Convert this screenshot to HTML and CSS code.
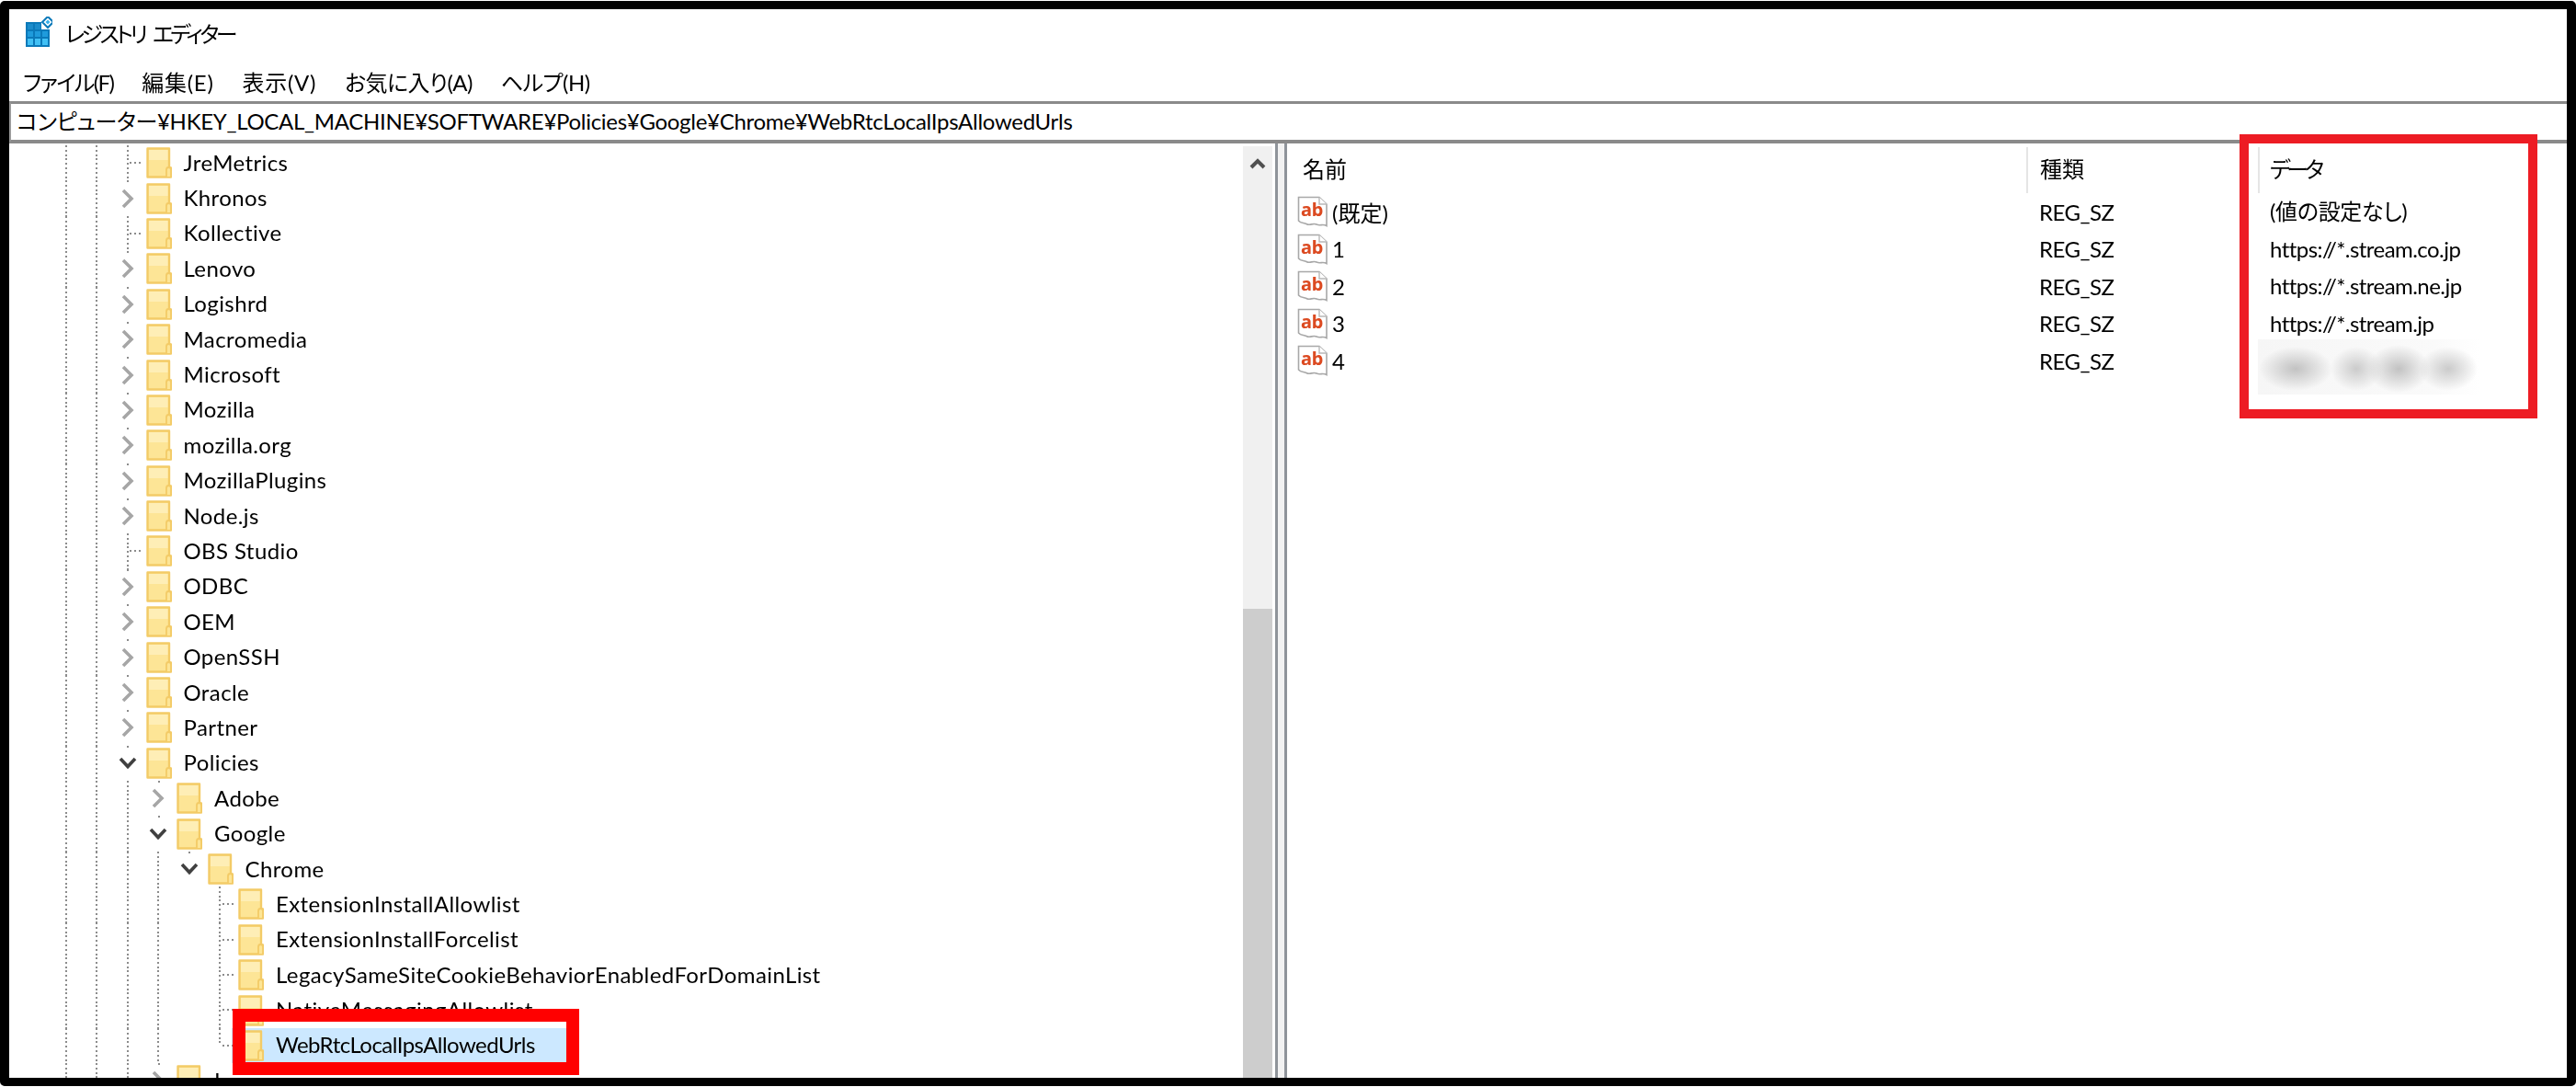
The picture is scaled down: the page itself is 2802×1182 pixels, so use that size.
FILE: index.html
```html
<!DOCTYPE html>
<html lang="ja">
<head>
<meta charset="utf-8">
<title>レジストリ エディター</title>
<link rel="stylesheet" href="styles.css">
</head>
<body>
<svg class="defs" width="0" height="0" aria-hidden="true">
  <symbol id="folder" viewBox="0 0 28 34">
    <path d="M1.5 1.5H25V22.5H27V32.5H1.5Z" fill="#fde596" stroke="#f3cb67" stroke-width="2.4" stroke-linejoin="round"/>
    <path d="M3 3H23.5V14H3Z" fill="#feeeb6"/>
    <path d="M22 32V24.5Q22 22 24.5 22Q27 22 27 24.5V32" fill="#fde596" stroke="#f3cb67" stroke-width="1.8"/>
  </symbol>
  <symbol id="closed" viewBox="0 0 16 24">
    <path d="M3 3L12 12L3 21" fill="none" stroke="#a6a6a6" stroke-width="3.6"/>
  </symbol>
  <symbol id="open" viewBox="0 0 20 16">
    <path d="M2 3L10 11.5L18 3" fill="none" stroke="#404040" stroke-width="3.6"/>
  </symbol>
  <symbol id="up" viewBox="0 0 20 14">
    <path d="M3 11L10 4L17 11" fill="none" stroke="#505050" stroke-width="4"/>
  </symbol>
  <symbol id="page" viewBox="0 0 34 34">
    <path d="M1.5 1.5H24L32 9V32.5C28 30 25 33 21 31C17 29 14 33 10 30.5C7 29 4 30 1.5 27Z" fill="#fff" stroke="#a8a8a8" stroke-width="1.6"/>
    <path d="M24 1.5V9H32" fill="#fff" stroke="#b8b8b8" stroke-width="1.4"/>
  </symbol>
</svg>
<div class="frame">
  <header class="titlebar">
    <svg class="appicon" width="30" height="36" viewBox="0 0 30 36">
      <path d="M1 6H18V14H27V33H1Z" fill="#0b79b9"/>
      <path d="M3 8H9V14H3ZM11 8H17V14H11Z" fill="#1b8ccb"/>
      <path d="M3 16H9V22H3ZM11 16H17V22H11ZM19 16H25V22H19Z" fill="#1f9bdc"/>
      <path d="M3 24H9V31H3ZM11 24H17V31H11ZM19 24H25V31H19Z" fill="#41c0f5"/>
      <path d="M25 0L31 6L25 12L19 6Z" fill="#fff" stroke="#0b79b9" stroke-width="2"/>
      <path d="M25 3.5L27.5 6L25 8.5L22.5 6Z" fill="#37b0ea"/>
    </svg>
    <span class="title-text">レジストリ エディター</span>
  </header>
  <nav class="menubar">
    <span class="menu-item kana">ファイル(F)</span>
    <span class="menu-item kanji">編集(E)</span>
    <span class="menu-item kanji">表示(V)</span>
    <span class="menu-item mixed">お気に入り(A)</span>
    <span class="menu-item mixed">ヘルプ(H)</span>
  </nav>
  <div class="address">コンピューター¥HKEY_LOCAL_MACHINE¥SOFTWARE¥Policies¥Google¥Chrome¥WebRtcLocalIpsAllowedUrls</div>
  <main class="split">
    <section class="tree-pane">
      <div class="tree">
        <div class="row"><i class="g"></i><i class="g"></i><i class="leaf"></i><svg class="folder"><use href="#folder"/></svg><span class="label">JreMetrics</span></div>
        <div class="row"><i class="g"></i><i class="g"></i><i class="twist"><svg class="chev"><use href="#closed"/></svg></i><svg class="folder"><use href="#folder"/></svg><span class="label">Khronos</span></div>
        <div class="row"><i class="g"></i><i class="g"></i><i class="leaf"></i><svg class="folder"><use href="#folder"/></svg><span class="label">Kollective</span></div>
        <div class="row"><i class="g"></i><i class="g"></i><i class="twist"><svg class="chev"><use href="#closed"/></svg></i><svg class="folder"><use href="#folder"/></svg><span class="label">Lenovo</span></div>
        <div class="row"><i class="g"></i><i class="g"></i><i class="twist"><svg class="chev"><use href="#closed"/></svg></i><svg class="folder"><use href="#folder"/></svg><span class="label">Logishrd</span></div>
        <div class="row"><i class="g"></i><i class="g"></i><i class="twist"><svg class="chev"><use href="#closed"/></svg></i><svg class="folder"><use href="#folder"/></svg><span class="label">Macromedia</span></div>
        <div class="row"><i class="g"></i><i class="g"></i><i class="twist"><svg class="chev"><use href="#closed"/></svg></i><svg class="folder"><use href="#folder"/></svg><span class="label">Microsoft</span></div>
        <div class="row"><i class="g"></i><i class="g"></i><i class="twist"><svg class="chev"><use href="#closed"/></svg></i><svg class="folder"><use href="#folder"/></svg><span class="label">Mozilla</span></div>
        <div class="row"><i class="g"></i><i class="g"></i><i class="twist"><svg class="chev"><use href="#closed"/></svg></i><svg class="folder"><use href="#folder"/></svg><span class="label">mozilla.org</span></div>
        <div class="row"><i class="g"></i><i class="g"></i><i class="twist"><svg class="chev"><use href="#closed"/></svg></i><svg class="folder"><use href="#folder"/></svg><span class="label">MozillaPlugins</span></div>
        <div class="row"><i class="g"></i><i class="g"></i><i class="twist"><svg class="chev"><use href="#closed"/></svg></i><svg class="folder"><use href="#folder"/></svg><span class="label">Node.js</span></div>
        <div class="row"><i class="g"></i><i class="g"></i><i class="leaf"></i><svg class="folder"><use href="#folder"/></svg><span class="label">OBS Studio</span></div>
        <div class="row"><i class="g"></i><i class="g"></i><i class="twist"><svg class="chev"><use href="#closed"/></svg></i><svg class="folder"><use href="#folder"/></svg><span class="label">ODBC</span></div>
        <div class="row"><i class="g"></i><i class="g"></i><i class="twist"><svg class="chev"><use href="#closed"/></svg></i><svg class="folder"><use href="#folder"/></svg><span class="label">OEM</span></div>
        <div class="row"><i class="g"></i><i class="g"></i><i class="twist"><svg class="chev"><use href="#closed"/></svg></i><svg class="folder"><use href="#folder"/></svg><span class="label">OpenSSH</span></div>
        <div class="row"><i class="g"></i><i class="g"></i><i class="twist"><svg class="chev"><use href="#closed"/></svg></i><svg class="folder"><use href="#folder"/></svg><span class="label">Oracle</span></div>
        <div class="row"><i class="g"></i><i class="g"></i><i class="twist"><svg class="chev"><use href="#closed"/></svg></i><svg class="folder"><use href="#folder"/></svg><span class="label">Partner</span></div>
        <div class="row"><i class="g"></i><i class="g"></i><i class="twist"><svg class="chev-open"><use href="#open"/></svg></i><svg class="folder"><use href="#folder"/></svg><span class="label">Policies</span></div>
        <div class="row"><i class="g"></i><i class="g"></i><i class="g"></i><i class="twist"><svg class="chev"><use href="#closed"/></svg></i><svg class="folder"><use href="#folder"/></svg><span class="label">Adobe</span></div>
        <div class="row"><i class="g"></i><i class="g"></i><i class="g"></i><i class="twist"><svg class="chev-open"><use href="#open"/></svg></i><svg class="folder"><use href="#folder"/></svg><span class="label">Google</span></div>
        <div class="row"><i class="g"></i><i class="g"></i><i class="g"></i><i class="g"></i><i class="twist"><svg class="chev-open"><use href="#open"/></svg></i><svg class="folder"><use href="#folder"/></svg><span class="label">Chrome</span></div>
        <div class="row"><i class="g"></i><i class="g"></i><i class="g"></i><i class="g"></i><i class="blank"></i><i class="leaf"></i><svg class="folder"><use href="#folder"/></svg><span class="label">ExtensionInstallAllowlist</span></div>
        <div class="row"><i class="g"></i><i class="g"></i><i class="g"></i><i class="g"></i><i class="blank"></i><i class="leaf"></i><svg class="folder"><use href="#folder"/></svg><span class="label">ExtensionInstallForcelist</span></div>
        <div class="row"><i class="g"></i><i class="g"></i><i class="g"></i><i class="g"></i><i class="blank"></i><i class="leaf"></i><svg class="folder"><use href="#folder"/></svg><span class="label">LegacySameSiteCookieBehaviorEnabledForDomainList</span></div>
        <div class="row"><i class="g"></i><i class="g"></i><i class="g"></i><i class="g"></i><i class="blank"></i><i class="leaf"></i><svg class="folder"><use href="#folder"/></svg><span class="label">NativeMessagingAllowlist</span></div>
        <div class="row"><i class="g"></i><i class="g"></i><i class="g"></i><i class="g"></i><i class="blank"></i><i class="leaf last"></i><span class="selected"><svg class="folder"><use href="#folder"/></svg><span class="label label-selected">WebRtcLocalIpsAllowedUrls</span></span></div>
        <div class="row"><i class="g"></i><i class="g"></i><i class="g"></i><i class="twist"><svg class="chev"><use href="#closed"/></svg></i><svg class="folder"><use href="#folder"/></svg><span class="label">Lenovo</span></div>
      </div>
      <div class="scrollbar">
        <div class="scroll-up"><svg class="up"><use href="#up"/></svg></div>
        <div class="thumb"></div>
      </div>
    </section>
    <div class="splitter"></div>
    <section class="list-pane">
      <div class="list-head">
        <div class="col-name">名前</div>
        <div class="col-type">種類</div>
        <div class="col-data">データ</div>
      </div>
      <div class="list-row">
        <div class="cell-name"><span class="ab"><svg class="page"><use href="#page"/></svg><b class="ab-text">ab</b></span>(既定)</div>
        <div class="cell-type">REG_SZ</div>
        <div class="cell-data">(値の設定なし)</div>
      </div>
      <div class="list-row">
        <div class="cell-name"><span class="ab"><svg class="page"><use href="#page"/></svg><b class="ab-text">ab</b></span>1</div>
        <div class="cell-type">REG_SZ</div>
        <div class="cell-data cell-url">https://*.stream.co.jp</div>
      </div>
      <div class="list-row">
        <div class="cell-name"><span class="ab"><svg class="page"><use href="#page"/></svg><b class="ab-text">ab</b></span>2</div>
        <div class="cell-type">REG_SZ</div>
        <div class="cell-data cell-url">https://*.stream.ne.jp</div>
      </div>
      <div class="list-row">
        <div class="cell-name"><span class="ab"><svg class="page"><use href="#page"/></svg><b class="ab-text">ab</b></span>3</div>
        <div class="cell-type">REG_SZ</div>
        <div class="cell-data cell-url">https://*.stream.jp</div>
      </div>
      <div class="list-row">
        <div class="cell-name"><span class="ab"><svg class="page"><use href="#page"/></svg><b class="ab-text">ab</b></span>4</div>
        <div class="cell-type">REG_SZ</div>
        <div class="cell-data"><span class="redact"></span></div>
      </div>
    </section>
  </main>
  <div class="callout callout-tree"></div>
  <div class="callout callout-data"></div>
</div>
</body>
</html>
```
FILE: styles.css
```css
* { box-sizing: border-box; }
html, body { margin: 0; padding: 0; height: 100%; background: #fff; overflow: hidden; }
body {
  font-family: "Lato", "Noto Sans CJK JP", sans-serif;
  font-size: 24px;
  font-feature-settings: "palt";
  color: #000;
}
.defs { position: absolute; }
.frame {
  position: relative;
  width: 2802px;
  height: 1180px;
  margin-top: 1px;
  border: 9px solid #000;
  border-left-width: 10px;
  border-right-width: 10px;
  border-radius: 5px;
  display: flex;
  flex-direction: column;
  background: #fff;
  overflow: hidden;
}
.titlebar {
  height: 50px;
  display: flex;
  align-items: center;
  padding-left: 17px;
  gap: 14px;
  flex: none;
}
.appicon { flex: none; margin-top: 2px; }
.title-text { letter-spacing: -3.6px; word-spacing: 6px; filter: blur(.45px); }
.menubar {
  height: 47px;
  flex: none;
  display: flex;
  align-items: center;
  gap: 31px;
  padding: 9px 0 0 15px;
  filter: blur(.45px);
}
.kana { letter-spacing: -1.6px; }
.kanji { letter-spacing: .7px; }
.mixed { letter-spacing: -.55px; }
.address {
  flex: none;
  height: 46px;
  margin-top: 3px;
  border-top: 3px solid #8a8a8a;
  border-bottom: 4px solid #8a8a8a;
  border-left: 2px solid #9a9a9a;
  padding-left: 6px;
  line-height: 38px;
  letter-spacing: -.29px;
  white-space: nowrap;
}
.split {
  flex: 1;
  min-height: 0;
  display: flex;
  overflow: hidden;
}
.tree-pane {
  width: 1377px;
  flex: none;
  display: flex;
  padding-top: 3px;
}
.tree {
  width: 1342px;
  flex: none;
  margin-top: -1px;
  padding-left: 45px;
  overflow: hidden;
  filter: blur(.45px);
}
.row {
  height: 38.4px;
  display: flex;
  align-items: center;
  white-space: nowrap;
}
.g, .leaf, .twist, .blank {
  width: 33.5px;
  height: 100%;
  flex: none;
  display: flex;
  align-items: center;
  justify-content: center;
  position: relative;
}
.g::before, .leaf::before {
  content: "";
  width: 2px;
  height: 100%;
  background: repeating-linear-gradient(to bottom, #8c8c8c 0 2px, transparent 2px 4.8px);
}
.leaf::after {
  content: "";
  position: absolute;
  left: 19px;
  top: 18px;
  width: 14px;
  height: 2px;
  background: repeating-linear-gradient(to right, #8c8c8c 0 2px, transparent 2px 4.8px);
}
.leaf.last::before { height: 50%; align-self: flex-start; }
.twist::before {
  content: "";
  position: absolute;
  left: 16px;
  top: 0;
  width: 2px;
  height: 2px;
  background: #8c8c8c;
}
.folder { width: 28px; height: 34px; flex: none; margin-left: 3px; }
.chev { width: 16px; height: 24px; }
.chev-open { width: 20px; height: 16px; }
.label { margin: -2px 0 0 13px; letter-spacing: .4px; }
.label-selected { letter-spacing: -.55px; }
.selected {
  display: flex;
  align-items: center;
  height: 100%;
  margin-left: -4px;
  padding: 0 40px 0 4px;
  background: #cce8ff;
}
.scrollbar {
  width: 32px;
  flex: none;
  background: #f0f0f0;
  display: flex;
  flex-direction: column;
}
.scroll-up {
  height: 40px;
  display: flex;
  justify-content: center;
  padding-top: 12px;
}
.up { width: 20px; height: 14px; }
.thumb { margin-top: 463px; flex: 1; background: #cdcdcd; }
.splitter {
  width: 13px;
  flex: none;
  background: #f2f2f2;
  border-left: 3px solid #8f949a;
  border-right: 3px solid #8f949a;
}
.list-pane { flex: 1; min-width: 0; padding-top: 4px; filter: blur(.45px); }
.list-head, .list-row {
  display: grid;
  grid-template-columns: 804px 252px 1fr;
}
.list-head { height: 50px; align-items: stretch; line-height: 48px; }
.col-name { padding-left: 17px; }
.col-type { border-left: 2px solid #e5e5e5; padding-left: 13px; }
.col-data { border-left: 2px solid #e5e5e5; padding-left: 11px; letter-spacing: -4px; }
.list-row { height: 40.5px; align-items: center; }
.cell-name { display: flex; align-items: center; padding-left: 11px; gap: 4px; }
.cell-type { padding-left: 14px; letter-spacing: -.5px; }
.cell-data { padding-left: 13px; letter-spacing: -.3px; position: relative; height: 100%; line-height: 40px; }
.cell-url { letter-spacing: -.55px; }
.ab { position: relative; width: 34px; height: 34px; flex: none; }
.page { width: 34px; height: 34px; display: block; }
.ab-text {
  position: absolute;
  left: 4px;
  top: 3px;
  font: 700 20px/24px "Noto Sans", sans-serif;
  color: #dc4a21;
  letter-spacing: -.3px;
}
.redact {
  position: absolute;
  left: 0;
  top: -3px;
  width: 241px;
  height: 60px;
  background:
    radial-gradient(ellipse 40px 24px at 41px 32px, #c2c2c2, transparent),
    radial-gradient(ellipse 28px 24px at 107px 32px, #cbcbcb, transparent),
    radial-gradient(ellipse 34px 26px at 153px 32px, #c2c2c2, transparent),
    radial-gradient(ellipse 32px 24px at 207px 32px, #cbcbcb, transparent),
    linear-gradient(to right, #f6f6f6, #fafafa 80%, #fff);
}
.callout {
  position: absolute;
  background: transparent;
}
.callout-tree {
  left: 243px;
  top: 1087px;
  width: 377px;
  height: 72px;
  border: 14px solid #f00;
}
.callout-data {
  left: 2426px;
  top: 136px;
  width: 324px;
  height: 309px;
  border: 10px solid #ed1c24;
}
```
